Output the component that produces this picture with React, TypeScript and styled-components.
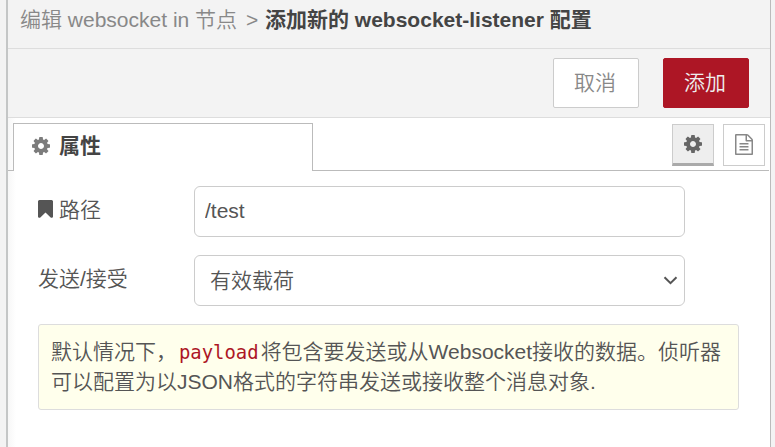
import React from "react";
import styled, { createGlobalStyle, css } from "styled-components";

const sans = `"Liberation Sans", "Noto Sans CJK SC", sans-serif`;

const GlobalStyle = createGlobalStyle`
  *, *::before, *::after { box-sizing: border-box; }
  body {
    margin: 0;
    background: #f3f3f3;
    overflow: hidden;
  }
`;

const Workspace = styled.div`
  height: 447px;
  padding: 0 4px 0 6px;
  background: #f3f3f3;
  color: #555;
  font: 350 21px/30px ${sans};
`;

const Tray = styled.section`
  display: flex;
  flex-direction: column;
  height: 100%;
  border-left: 2px solid #c4c6c6;
  border-right: 1px solid #bbb;
  background: #fff;
`;

const TrayHeader = styled.header`
  height: 49px;
  padding: 5px 0 0 12px;
  border-bottom: 1px solid #ddd;
  background: #f3f3f3;
  color: #888;
  white-space: nowrap;
`;

const Separator = styled.span`
  margin: 0 1px 0 3px;
`;

const CurrentCrumb = styled.span`
  color: #444;
  font-weight: 700;
`;

const Toolbar = styled.div`
  display: flex;
  justify-content: flex-end;
  gap: 24px;
  height: 69px;
  padding: 9px 21px 0 0;
  border-bottom: 1px solid #ddd;
  background: #f3f3f3;
`;

const TrayButton = styled.button<{ $primary?: boolean }>`
  width: 86px;
  height: 50px;
  padding: 0 2px 0 0;
  border: 1px solid ${(p) => (p.$primary ? "#ad1625" : "#ccc")};
  border-radius: 2px;
  background: ${(p) => (p.$primary ? "#ad1625" : "#fff")};
  color: ${(p) => (p.$primary ? "#eee" : "#888")};
  font: inherit;
`;

const insetShade = css`
  background: linear-gradient(to right, #f7f7f7, #fff 8px);
`;

const TabBar = styled.div`
  display: flex;
  height: 53px;
  padding: 5px 1px 0 0;
  ${insetShade}
`;

const TabLead = styled.div`
  width: 5px;
  border-bottom: 1px solid #bbb;
`;

const Tab = styled.div`
  display: flex;
  gap: 9px;
  width: 300px;
  padding: 7px 0 0 18px;
  border: 1px solid #bbb;
  border-bottom: 0;
  background: #fff;
  color: #444;
  font-weight: 700;

  svg { margin-top: 6px; }
`;

const TabTools = styled.div`
  display: flex;
  flex: 1;
  justify-content: flex-end;
  gap: 9px;
  padding: 1px 4px 0 0;
  border-bottom: 1px solid #bbb;
`;

const ToolButton = styled.button<{ $active?: boolean }>`
  display: flex;
  align-items: center;
  justify-content: center;
  width: 42px;
  height: 42px;
  padding: 0 0 2px;
  border: 1px solid #ccc;
  background: #fff;
  color: #888;
  ${(p) =>
    p.$active &&
    css`
      padding: 0;
      border-bottom: 3px solid #aaa;
      background: #eee;
      color: #666;
    `}
`;

const Form = styled.div`
  display: flex;
  flex: 1;
  flex-direction: column;
  padding: 15px 31px 0 30px;
  ${insetShade}
`;

const FormRow = styled.div`
  display: flex;
  margin-bottom: 18px;
`;

const Label = styled.label`
  display: flex;
  gap: 6px;
  width: 156px;
  padding-top: 9px;

  svg { margin-top: 5px; }
`;

const fieldFrame = css`
  width: 491px;
  height: 51px;
  border: 1px solid #ccc;
  border-radius: 6px;
  background: #fff;
  color: #555;
  font: inherit;
`;

const TextInput = styled.input`
  ${fieldFrame}
  padding: 0 9px 2px 10px;
  outline: none;
`;

const SelectBox = styled.div`
  ${fieldFrame}
  display: flex;
  align-items: center;
  justify-content: space-between;
  padding: 0 6px 0 15px;
`;

const Tip = styled.p`
  width: 701px;
  height: 86px;
  margin: 0;
  padding: 12px 0 0 12px;
  border: 1px solid #ddd;
  border-radius: 3px;
  background: #ffffec;
  white-space: nowrap;
`;

const Code = styled.code`
  padding: 0 2px;
  color: #ad1625;
  font: 400 18.9px/20px "DejaVu Sans Mono", monospace;
`;

const CogIcon = ({ color = "currentColor" }: { color?: string }) => (
  <svg width="18" height="18" viewBox="0 128 1536 1536" fill={color}>
    <path d="M1024 896q0-106-75-181t-181-75-181 75-75 181 75 181 181 75 181-75 75-181zm512-109v222q0 12-8 23t-20 13l-185 28q-19 54-39 91 35 50 107 138 10 12 10 25t-9 23q-27 37-99 108t-94 71q-12 0-26-9l-138-108q-44 23-91 38-16 136-29 186-7 28-36 28h-222q-14 0-24.500-8.500t-11.500-21.500l-28-184q-49-16-90-37l-141 107q-10 9-25 9-14 0-25-11-126-114-165-168-7-10-7-23 0-12 8-23 15-21 51-66.500t54-70.500q-27-50-41-99l-183-27q-13-2-21-12.500t-8-23.500v-222q0-12 8-23t19-13l186-28q14-46 39-92-40-57-107-138-10-12-10-24 0-10 9-23 26-36 98.500-107.500t94.500-71.500q13 0 26 10l138 107q44-23 91-38 16-136 29-186 7-28 36-28h222q14 0 24.500 8.500t11.500 21.500l28 184q49 16 90 37l142-107q9-9 24-9 13 0 25 10 129 119 165 170 7 8 7 22 0 12-8 23-15 21-51 66.500t-54 70.500q26 50 41 98l183 28q13 2 21 12.500t8 23.500z" />
  </svg>
);

const FileIcon = () => (
  <svg width="18" height="21" viewBox="0 0 1536 1792" fill="currentColor">
    <path d="M1468 380q28 28 48 76t20 88v1152q0 40-28 68t-68 28h-1344q-40 0-68-28t-28-68v-1600q0-40 28-68t68-28h896q40 0 88 20t76 48zm-444-244v376h376q-10-29-22-41l-313-313q-12-12-41-22zm384 1528v-1024h-416q-40 0-68-28t-28-68v-416h-768v1536h1280zm-1024-864q0-14 9-23t23-9h704q14 0 23 9t9 23v64q0 14-9 23t-23 9h-704q-14 0-23-9t-9-23v-64zm736 224q14 0 23 9t9 23v64q0 14-9 23t-23 9h-704q-14 0-23-9t-9-23v-64q0-14 9-23t23-9h704zm0 256q14 0 23 9t9 23v64q0 14-9 23t-23 9h-704q-14 0-23-9t-9-23v-64q0-14 9-23t23-9h704z" />
  </svg>
);

const BookmarkIcon = () => (
  <svg width="15" height="18" viewBox="0 0 1280 1520" fill="currentColor">
    <path d="M1164 0q23 0 44 9 33 13 52.500 41t19.500 62v1289q0 34-19.500 62t-52.500 41q-19 8-44 8-48 0-83-32l-441-424-441 424q-36 33-83 33-23 0-44-9-33-13-52.500-41t-19.500-62v-1289q0-34 19.500-62t52.500-41q21-9 44-9h1048z" />
  </svg>
);

const ChevronIcon = () => (
  <svg width="15" height="10" viewBox="0 0 15 10" fill="none" stroke="#555" strokeWidth="2">
    <path d="M1.500 1.200 7.500 7.200 13.500 1.200" />
  </svg>
);

export default function App() {
  return (
    <>
      <GlobalStyle />
      <Workspace>
        <Tray>
          <TrayHeader>
            编辑 websocket in 节点 <Separator>&gt;</Separator>{" "}
            <CurrentCrumb>添加新的 websocket-listener 配置</CurrentCrumb>
          </TrayHeader>
          <Toolbar>
            <TrayButton>取消</TrayButton>
            <TrayButton $primary>添加</TrayButton>
          </Toolbar>
          <TabBar>
            <TabLead />
            <Tab>
              <CogIcon color="#7c7c7c" />
              属性
            </Tab>
            <TabTools>
              <ToolButton $active aria-label="属性">
                <CogIcon />
              </ToolButton>
              <ToolButton aria-label="描述">
                <FileIcon />
              </ToolButton>
            </TabTools>
          </TabBar>
          <Form>
            <FormRow>
              <Label htmlFor="path">
                <BookmarkIcon />
                路径
              </Label>
              <TextInput id="path" defaultValue="/test" />
            </FormRow>
            <FormRow>
              <Label>发送/接受</Label>
              <SelectBox role="combobox">
                有效载荷
                <ChevronIcon />
              </SelectBox>
            </FormRow>
            <Tip>
              默认情况下，<Code>payload</Code>将包含要发送或从Websocket接收的数据。侦听器
              <br />
              可以配置为以JSON格式的字符串发送或接收整个消息对象.
            </Tip>
          </Form>
        </Tray>
      </Workspace>
    </>
  );
}
